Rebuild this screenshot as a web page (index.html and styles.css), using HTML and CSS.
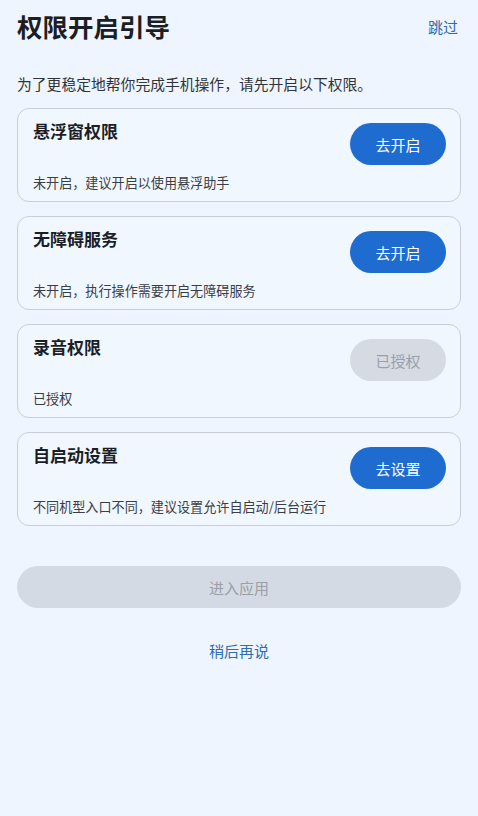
FILE: index.html
```html
<!DOCTYPE html>
<html>
	<head>
		<meta charset="utf-8" />
		<title>权限开启引导</title>
		<link rel="stylesheet" href="styles.css">
	</head>
	<body>
		<div class="page">
			<div class="header">
				<h1 class="title">权限开启引导</h1>
				<a class="skip">跳过</a>
			</div>
			<p class="intro">为了更稳定地帮你完成手机操作，请先开启以下权限。</p>

			<div class="list">
				<div class="card">
					<div class="info">
						<div class="name">悬浮窗权限</div>
						<div class="desc">未开启，建议开启以使用悬浮助手</div>
					</div>
					<button class="btn">去开启</button>
				</div>
				<div class="card">
					<div class="info">
						<div class="name">无障碍服务</div>
						<div class="desc">未开启，执行操作需要开启无障碍服务</div>
					</div>
					<button class="btn">去开启</button>
				</div>
				<div class="card">
					<div class="info">
						<div class="name">录音权限</div>
						<div class="desc">已授权</div>
					</div>
					<button class="btn done">已授权</button>
				</div>
				<div class="card">
					<div class="info">
						<div class="name">自启动设置</div>
						<div class="desc">不同机型入口不同，建议设置允许自启动/后台运行</div>
					</div>
					<button class="btn">去设置</button>
				</div>
			</div>

			<button class="enter">进入应用</button>
			<a class="later">稍后再说</a>
		</div>
	</body>
</html>
```

FILE: styles.css
```css
* {
	box-sizing: border-box;
}
body {
	margin: 0;
	background-color: #eef5fe;
	font-family: "Noto Sans CJK SC", "Noto Sans", sans-serif;
	color: #1b1e24;
}
.page {
	padding: 8px 17px 0 17px;
}
.header {
	display: flex;
	justify-content: space-between;
	align-items: center;
	height: 36px;
}
.title {
	margin: 0;
	font-size: 25.5px;
	font-weight: 700;
	line-height: 36px;
}
.skip {
	font-size: 15px;
	color: #2f6cb0;
	margin-right: 3px;
}
.intro {
	margin: 30px 0 0 0;
	font-size: 14.8px;
	line-height: 20px;
	color: #30343a;
}
.list {
	display: flex;
	flex-direction: column;
	gap: 14px;
	margin-top: 14px;
}
.card {
	display: flex;
	justify-content: space-between;
	align-items: flex-start;
	height: 94px;
	padding: 10px 14px 8px 15px;
	border: 1px solid #c9cedd;
	border-radius: 12px;
	background-color: #f1f7ff;
}
.info {
	display: flex;
	flex-direction: column;
	justify-content: space-between;
	height: 100%;
}
.name {
	font-size: 17px;
	font-weight: 700;
	line-height: 24px;
}
.desc {
	font-size: 13.1px;
	line-height: 20px;
	color: #3a3e45;
}
.btn {
	margin-top: 4px;
	width: 96px;
	height: 42px;
	border: none;
	border-radius: 21px;
	background-color: #1f6cd1;
	color: #ffffff;
	font-family: inherit;
	font-size: 15px;
}
.btn.done {
	background-color: #d5dae3;
	color: #9a9fa8;
}
.enter {
	display: block;
	width: 100%;
	height: 42px;
	margin-top: 40px;
	border: none;
	border-radius: 21px;
	background-color: #d4dae3;
	color: #9a9ea6;
	font-family: inherit;
	font-size: 15px;
}
.later {
	display: block;
	margin-top: 33px;
	text-align: center;
	font-size: 15px;
	line-height: 20px;
	color: #2f6cb0;
}
```
